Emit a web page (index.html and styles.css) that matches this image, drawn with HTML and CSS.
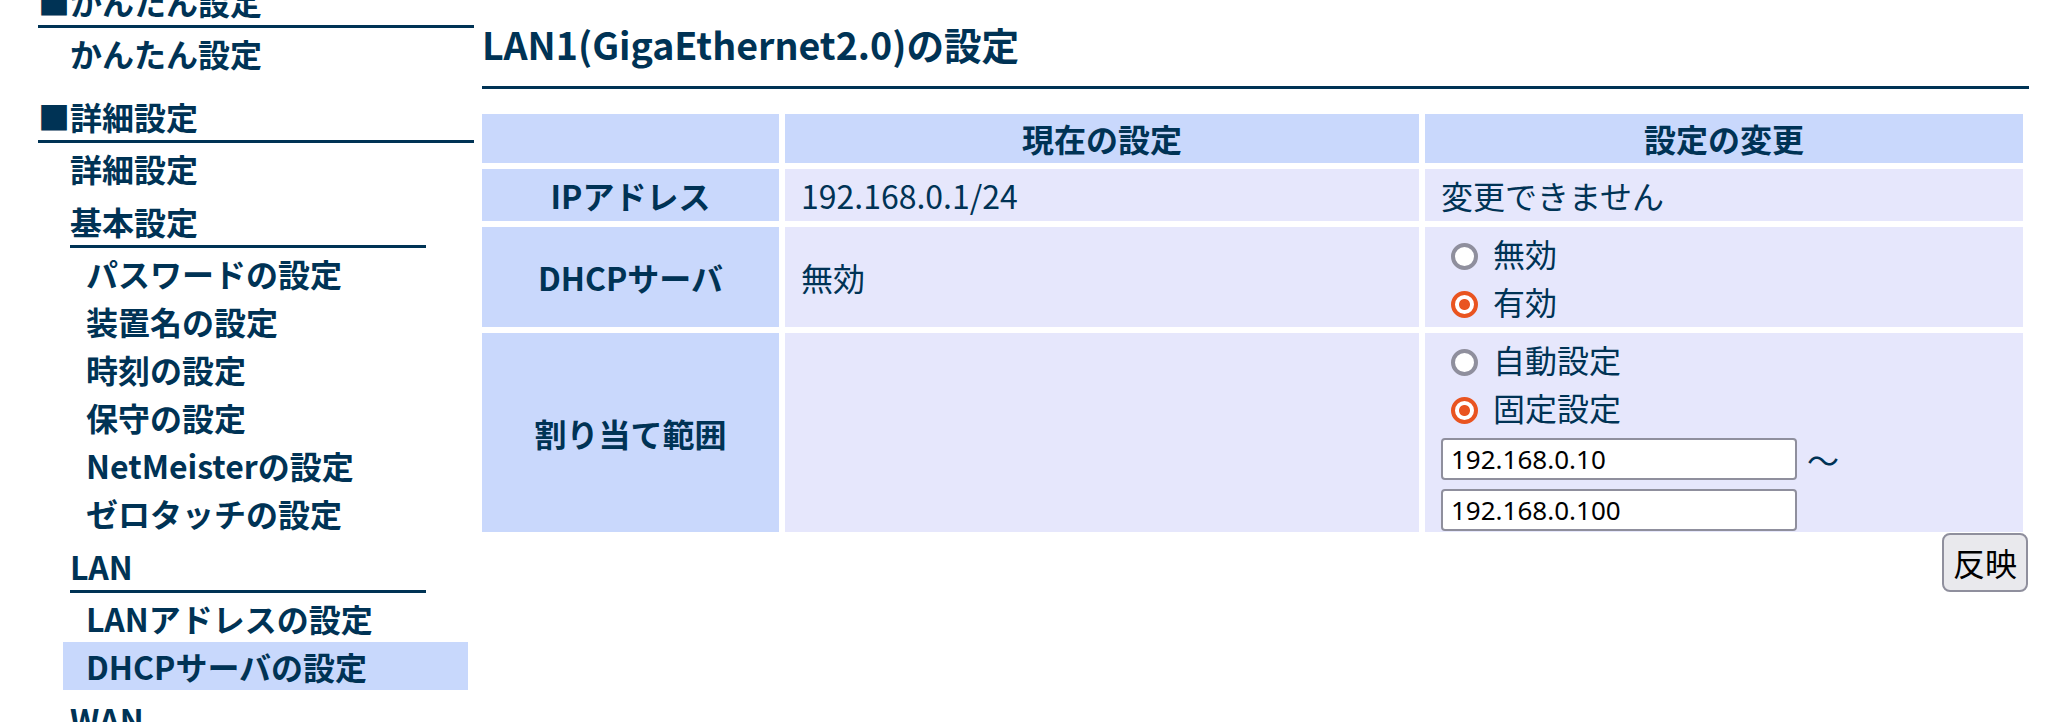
FILE: index.html
```html
<!DOCTYPE html>
<html lang="ja">
<head>
<meta charset="utf-8">
<title>LAN1(GigaEthernet2.0)の設定</title>
<link rel="stylesheet" href="styles.css">
</head>
<body>
<div class="page">
  <nav class="side">
    <section class="side-sec">
      <div class="side-h">■かんたん設定</div>
      <a class="side-item1" href="#">かんたん設定</a>
    </section>
    <section class="side-sec">
      <div class="side-h">■詳細設定</div>
      <a class="side-item1" href="#">詳細設定</a>
      <div class="side-group">
        <div class="side-sub">基本設定</div>
        <a class="side-item2" href="#">パスワードの設定</a>
        <a class="side-item2" href="#">装置名の設定</a>
        <a class="side-item2" href="#">時刻の設定</a>
        <a class="side-item2" href="#">保守の設定</a>
        <a class="side-item2" href="#">NetMeisterの設定</a>
        <a class="side-item2" href="#">ゼロタッチの設定</a>
      </div>
      <div class="side-group">
        <div class="side-sub">LAN</div>
        <a class="side-item2" href="#">LANアドレスの設定</a>
        <a class="side-item2 is-active" href="#">DHCPサーバの設定</a>
      </div>
      <div class="side-group">
        <div class="side-sub">WAN</div>
      </div>
    </section>
  </nav>

  <main class="main">
    <h1 class="page-title">LAN1(GigaEthernet2.0)の設定</h1>
    <table class="cfg">
      <colgroup>
        <col class="c-label">
        <col class="c-cur">
        <col class="c-new">
      </colgroup>
      <thead>
        <tr>
          <th class="head"></th>
          <th class="head">現在の設定</th>
          <th class="head">設定の変更</th>
        </tr>
      </thead>
      <tbody>
        <tr>
          <th class="label">IPアドレス</th>
          <td>192.168.0.1/24</td>
          <td>変更できません</td>
        </tr>
        <tr>
          <th class="label">DHCPサーバ</th>
          <td>無効</td>
          <td>
            <label class="choice"><input type="radio" name="dhcp" class="radio">無効</label>
            <label class="choice"><input type="radio" name="dhcp" class="radio" checked>有効</label>
          </td>
        </tr>
        <tr>
          <th class="label">割り当て範囲</th>
          <td></td>
          <td>
            <label class="choice"><input type="radio" name="range" class="radio">自動設定</label>
            <label class="choice"><input type="radio" name="range" class="radio" checked>固定設定</label>
            <div class="range range-first"><input type="text" class="ip" value="192.168.0.10"><span class="tilde">〜</span></div>
            <div class="range range-second"><input type="text" class="ip" value="192.168.0.100"></div>
          </td>
        </tr>
      </tbody>
    </table>
    <div class="actions"><button type="button" class="btn">反映</button></div>
  </main>
</div>
</body>
</html>
```

FILE: styles.css
```css
html, body {
  margin: 0;
  padding: 0;
  overflow: hidden;
  background: #ffffff;
}

body {
  font-family: "Noto Sans CJK JP", "Noto Sans", sans-serif;
  color: #003355;
}

.page {
  display: flex;
  align-items: flex-start;
  gap: 2px;
  padding: 0 33px 0 38px;
}

/* ---------- sidebar ---------- */
.side {
  flex: 0 0 436px;
  margin-top: -23px;
  font-size: 32px;
  line-height: 48px;
  font-weight: bold;
}

.side-sec + .side-sec {
  margin-top: 15px;
}

.side-h {
  border-bottom: 3px solid #003355;
  margin-bottom: 1px;
}

.side-item1,
.side-item2 {
  display: block;
  color: inherit;
  text-decoration: none;
}

.side-item1 {
  padding-left: 32px;
}

.side-sub {
  margin: 5px 0 1px 32px;
  width: 356px;
  border-bottom: 3px solid #003355;
}

.side-item2 {
  margin-left: 25px;
  width: 405px;
  padding-left: 23px;
  box-sizing: border-box;
}

.side-item2.is-active {
  background: #c8d8fc;
}

/* ---------- main ---------- */
.main {
  flex: 1;
  min-width: 0;
}

.page-title {
  margin: 15px 0 19px 6px;
  padding-bottom: 14px;
  border-bottom: 3px solid #003355;
  font-size: 37.6px;
  line-height: 57px;
  font-weight: bold;
}

.cfg {
  width: 100%;
  table-layout: fixed;
  border-collapse: separate;
  border-spacing: 6px;
  font-size: 32px;
  line-height: 48px;
}

.c-label { width: 297px; }
.c-cur { width: 634px; }
.c-new { width: 598px; }

.cfg th,
.cfg td {
  padding: 2px 16px;
  vertical-align: middle;
}

.cfg th {
  background: #c9d8fc;
  font-weight: bold;
  text-align: center;
}

.cfg th.head {
  padding: 0 16px 1px;
}

.cfg td {
  background: #e6e7fc;
  font-weight: normal;
  text-align: left;
}

.choice {
  display: flex;
  align-items: center;
  height: 48px;
}

.radio {
  appearance: none;
  -webkit-appearance: none;
  box-sizing: border-box;
  width: 27px;
  height: 27px;
  margin: 7px 15px 0 10px;
  border: 4px solid #8f8f9d;
  border-radius: 50%;
  background: #ffffff;
  flex: 0 0 auto;
}

.radio:checked {
  border-color: #e95420;
  background: radial-gradient(circle, #e95420 0 5px, #ffffff 6px);
}

.range {
  display: flex;
  align-items: center;
  height: 42px;
}

.range-first {
  margin-top: 7px;
}

.range-second {
  margin-top: 9px;
  margin-bottom: -1px;
}

.ip {
  box-sizing: border-box;
  width: 356px;
  height: 42px;
  margin: 0;
  padding: 0 8px;
  border: 2px solid #8f8f9d;
  border-radius: 4px;
  background: #ffffff;
  color: #000000;
  font-family: "Noto Sans", sans-serif;
  font-size: 26px;
}

.tilde {
  margin-left: 10px;
  font-size: 32px;
  line-height: 42px;
}

.actions {
  display: flex;
  justify-content: flex-end;
  margin-top: -5px;
  padding-right: 1px;
}

.btn {
  box-sizing: border-box;
  height: 59px;
  padding: 4px 9px;
  border: 2px solid #8f8f9d;
  border-radius: 8px;
  background: #e9e9ed;
  color: #000000;
  font-family: "Noto Sans CJK JP", sans-serif;
  font-size: 32px;
  line-height: 47px;
}
```
